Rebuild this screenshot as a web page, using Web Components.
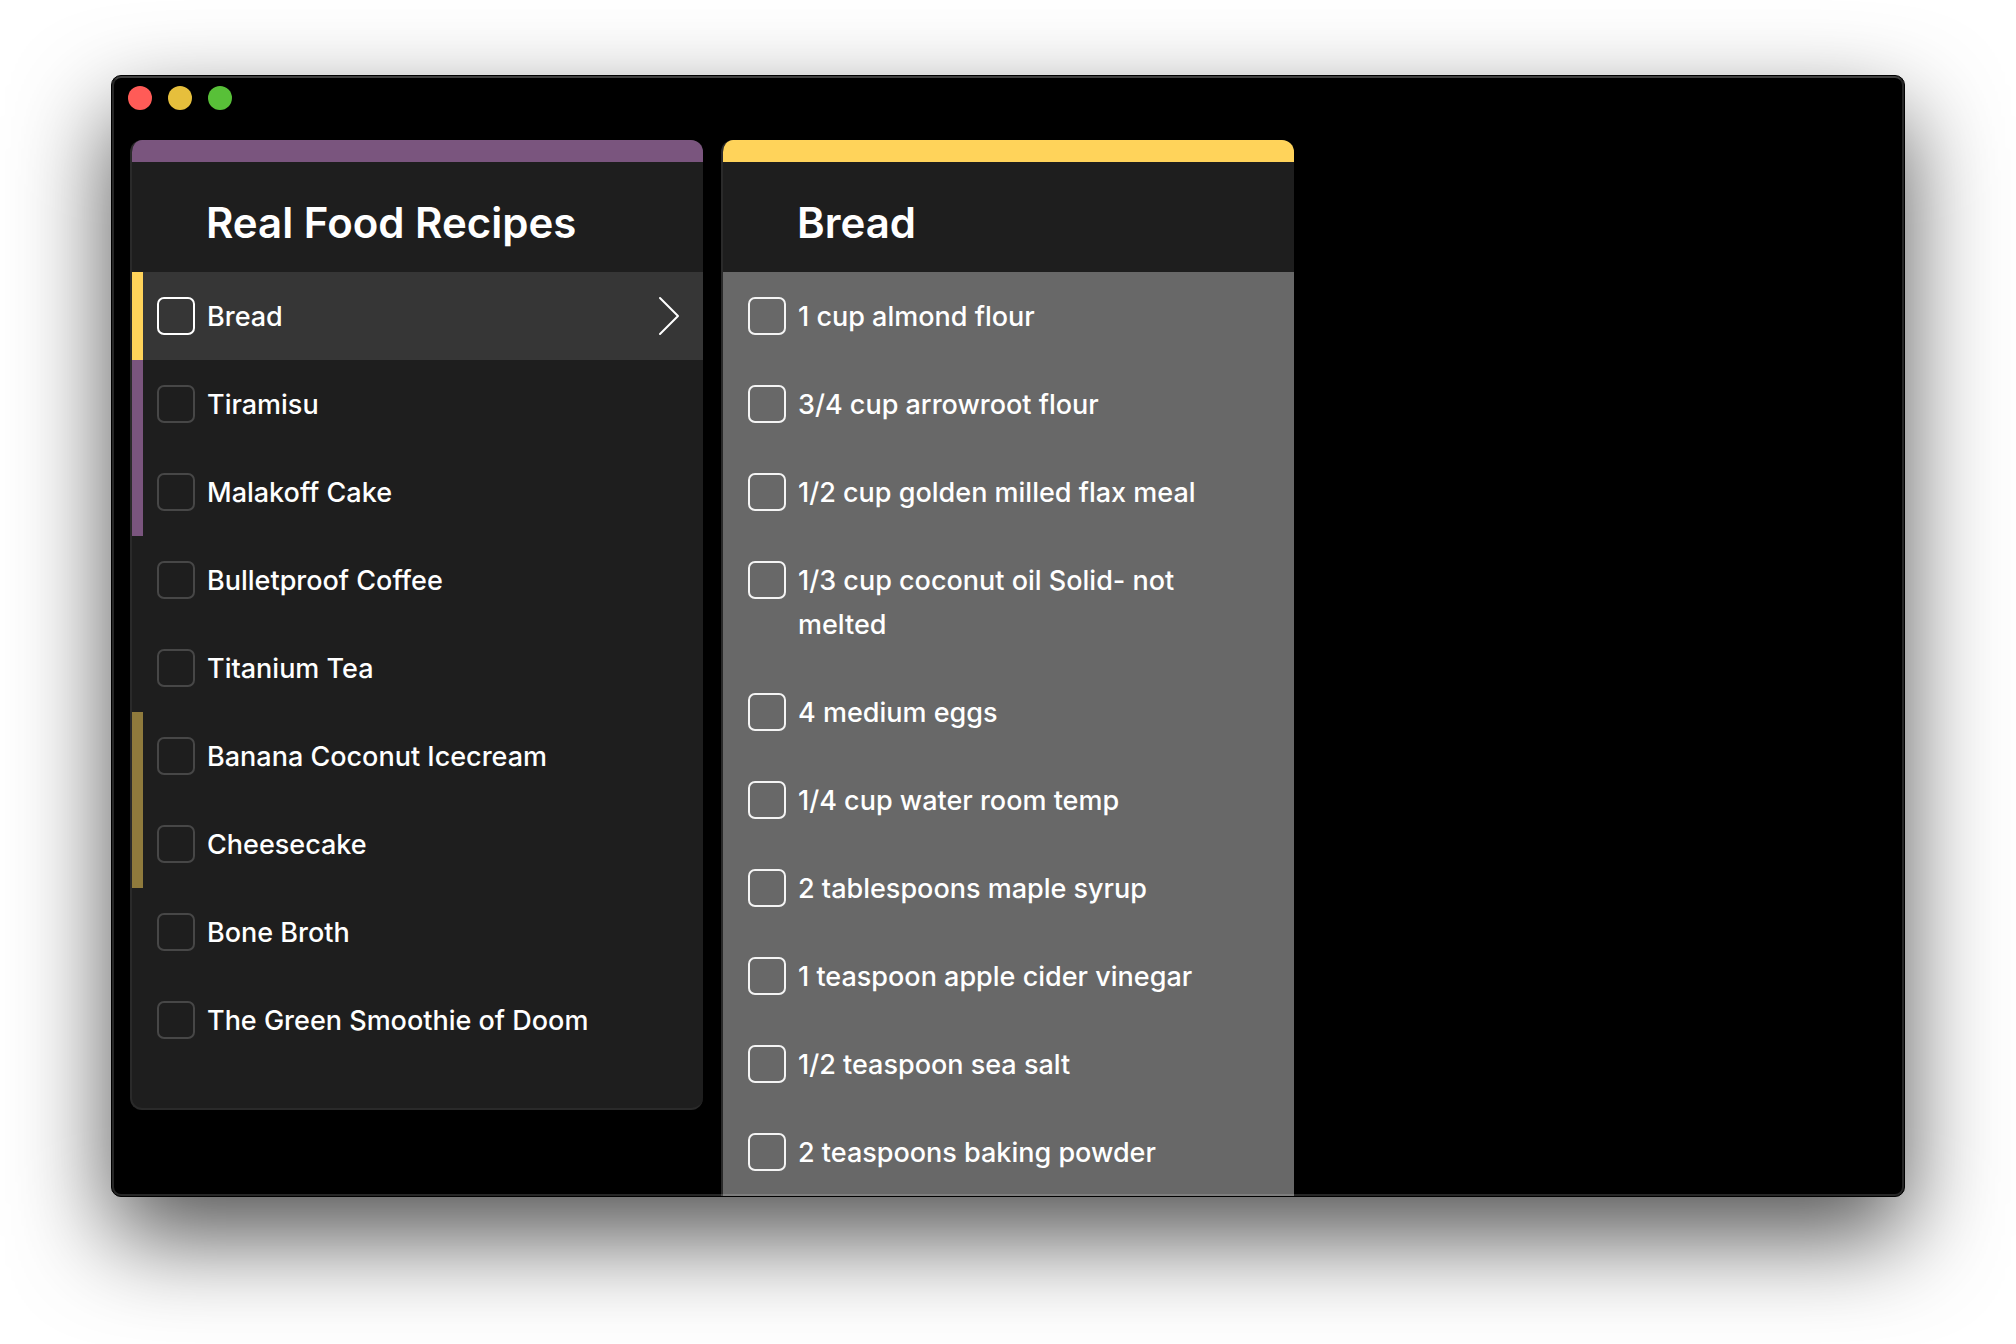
<!DOCTYPE html>
<html lang="en">
<head>
<meta charset="utf-8">
<title>Real Food Recipes</title>
<style>
  body {
    margin: 0;
    background: #fff;
    color: #fff;
    font-family: Inter, "Liberation Sans", sans-serif;
  }
</style>
</head>
<body>
<desktop-window>
  <list-column color="#7a557e" heading="Real Food Recipes">
    <list-item selected color="#ffd35a">Bread</list-item>
    <list-item color="#7a557e">Tiramisu</list-item>
    <list-item color="#7a557e">Malakoff Cake</list-item>
    <list-item>Bulletproof Coffee</list-item>
    <list-item>Titanium Tea</list-item>
    <list-item color="#8f7a3c">Banana Coconut Icecream</list-item>
    <list-item color="#8f7a3c">Cheesecake</list-item>
    <list-item>Bone Broth</list-item>
    <list-item>The Green Smoothie of Doom</list-item>
  </list-column>
  <list-column active color="#ffd35a" heading="Bread">
    <list-item>1 cup almond flour</list-item>
    <list-item>3/4 cup arrowroot flour</list-item>
    <list-item>1/2 cup golden milled flax meal</list-item>
    <list-item>1/3 cup coconut oil Solid- not melted</list-item>
    <list-item>4 medium eggs</list-item>
    <list-item>1/4 cup water room temp</list-item>
    <list-item>2 tablespoons maple syrup</list-item>
    <list-item>1 teaspoon apple cider vinegar</list-item>
    <list-item>1/2 teaspoon sea salt</list-item>
    <list-item>2 teaspoons baking powder</list-item>
  </list-column>
</desktop-window>

<template id="desktop-window">
  <style>
    :host {
      display: flex;
      box-sizing: border-box;
      height: 100vh;
      padding: 75px 111px 147px;
      overflow: hidden;
    }
    .window {
      position: relative;
      flex: 1;
      min-width: 0;
      display: flex;
      flex-direction: column;
      border: 1px solid #000;
      border-radius: 10px;
      background: #000;
      box-shadow: 0 40px 96px rgba(0, 0, 0, .68);
    }
    .window::after {
      content: "";
      position: absolute;
      inset: 0;
      border: 2px solid rgba(255, 255, 255, .15);
      border-top-color: rgba(255, 255, 255, .25);
      border-radius: 9px;
      pointer-events: none;
    }
    header {
      display: flex;
      gap: 16px;
      padding: 10px 16px 30px;
    }
    button {
      width: 24px;
      height: 24px;
      padding: 0;
      border: 0;
      border-radius: 50%;
    }
    .close { background: #ff5b57; }
    .minimise { background: #e6bf3c; }
    .zoom { background: #58c038; }
    main {
      flex: 1;
      min-height: 0;
      display: grid;
      grid-template-columns: repeat(3, minmax(0, 1fr));
      align-items: start;
      gap: 18px;
      padding: 0 19px 0 18px;
      overflow: hidden;
    }
  </style>
  <div class="window">
    <header>
      <button class="close" aria-label="Close"></button>
      <button class="minimise" aria-label="Minimise"></button>
      <button class="zoom" aria-label="Zoom"></button>
    </header>
    <main><slot></slot></main>
  </div>
</template>

<template id="list-column">
  <style>
    :host {
      display: block;
      --box: #474747;
    }
    section {
      border: solid #2a2a2a;
      border-width: 0 0 2px 2px;
      border-radius: 12px;
      background: #1e1e1e;
      overflow: hidden;
    }
    .band {
      height: 22px;
      background: var(--band);
    }
    h1 {
      margin: 0;
      padding: 36px 24px 24px 74px;
      font-size: 42px;
      font-weight: 600;
      line-height: 50px;
    }
    .items { padding-bottom: 44px; }
    :host([active]) { --box: #f4f4f4; }
    :host([active]) .items { background: #686868; }
  </style>
  <section>
    <div class="band"></div>
    <h1></h1>
    <div class="items"><slot></slot></div>
  </section>
</template>

<template id="list-item">
  <style>
    :host { display: block; }
    .row {
      display: flex;
      align-items: flex-start;
    }
    .tag {
      align-self: stretch;
      width: 11px;
      background: var(--tag, transparent);
    }
    label {
      flex: 1;
      min-width: 0;
      display: flex;
      align-items: flex-start;
      gap: 12px;
      padding: 23px 64px 21px 14px;
      font-size: 27px;
      font-weight: 500;
      line-height: 44px;
    }
    input {
      appearance: none;
      box-sizing: border-box;
      flex: none;
      width: 38px;
      height: 38px;
      margin: 2px 0;
      border: 2px solid var(--box);
      border-radius: 7px;
    }
    button {
      display: none;
      padding: 24px 22px 24px 0;
      border: 0;
      background: none;
      color: #fff;
    }
    svg { display: block; }
    :host([selected]) { --box: #fff; }
    :host([selected]) .row { background: #363636; }
    :host([selected]) button { display: block; }
  </style>
  <div class="row">
    <span class="tag"></span>
    <label><input type="checkbox"><span><slot></slot></span></label>
    <button aria-label="Open list">
      <svg width="24" height="40" viewBox="0 0 24 40" fill="none" stroke="currentColor" stroke-width="2" stroke-linecap="round" stroke-linejoin="round"><path d="M3 2 21 20 3 38"/></svg>
    </button>
  </div>
</template>

<script>
  class TemplateElement extends HTMLElement {
    constructor() {
      super();
      const template = document.getElementById(this.localName);
      this.attachShadow({ mode: "open" }).append(template.content.cloneNode(true));
    }
  }

  class DesktopWindow extends TemplateElement {}

  class ListColumn extends TemplateElement {
    connectedCallback() {
      this.shadowRoot.querySelector("h1").textContent = this.getAttribute("heading");
      this.shadowRoot.querySelector(".band").style.setProperty("--band", this.getAttribute("color"));
    }
  }

  class ListItem extends TemplateElement {
    connectedCallback() {
      const color = this.getAttribute("color");
      if (color) this.shadowRoot.querySelector(".tag").style.setProperty("--tag", color);
    }
  }

  customElements.define("desktop-window", DesktopWindow);
  customElements.define("list-column", ListColumn);
  customElements.define("list-item", ListItem);
</script>
</body>
</html>
